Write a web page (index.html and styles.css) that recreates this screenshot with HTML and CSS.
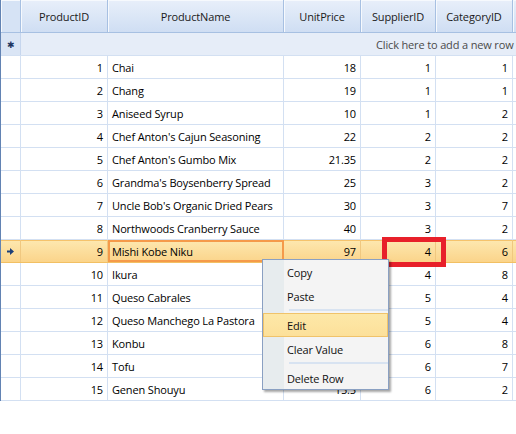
FILE: index.html
```html
<!DOCTYPE html>
<html>
<head>
<meta charset="utf-8">
<link rel="stylesheet" href="styles.css">
</head>
<body>
<div class="grid">
  <div class="row header">
    <div class="cell ind"></div>
    <div class="cell c1">ProductID</div>
    <div class="cell c2">ProductName</div>
    <div class="cell c3">UnitPrice</div>
    <div class="cell c4">SupplierID</div>
    <div class="cell c5">CategoryID</div>
    <div class="cell c6"></div>
  </div>
  <div class="row newrow">
    <div class="cell ind"><span class="star">&#x2731;</span></div>
    <div class="newtext">Click here to add a new row</div>
  </div>
  <div class="row"><div class="cell ind"></div><div class="cell c1 num">1</div><div class="cell c2">Chai</div><div class="cell c3 num">18</div><div class="cell c4 num">1</div><div class="cell c5 num">1</div><div class="cell c6"></div></div>
  <div class="row"><div class="cell ind"></div><div class="cell c1 num">2</div><div class="cell c2">Chang</div><div class="cell c3 num">19</div><div class="cell c4 num">1</div><div class="cell c5 num">1</div><div class="cell c6"></div></div>
  <div class="row"><div class="cell ind"></div><div class="cell c1 num">3</div><div class="cell c2">Aniseed Syrup</div><div class="cell c3 num">10</div><div class="cell c4 num">1</div><div class="cell c5 num">2</div><div class="cell c6"></div></div>
  <div class="row"><div class="cell ind"></div><div class="cell c1 num">4</div><div class="cell c2">Chef Anton's Cajun Seasoning</div><div class="cell c3 num">22</div><div class="cell c4 num">2</div><div class="cell c5 num">2</div><div class="cell c6"></div></div>
  <div class="row"><div class="cell ind"></div><div class="cell c1 num">5</div><div class="cell c2">Chef Anton's Gumbo Mix</div><div class="cell c3 num">21.35</div><div class="cell c4 num">2</div><div class="cell c5 num">2</div><div class="cell c6"></div></div>
  <div class="row"><div class="cell ind"></div><div class="cell c1 num">6</div><div class="cell c2">Grandma's Boysenberry Spread</div><div class="cell c3 num">25</div><div class="cell c4 num">3</div><div class="cell c5 num">2</div><div class="cell c6"></div></div>
  <div class="row"><div class="cell ind"></div><div class="cell c1 num">7</div><div class="cell c2">Uncle Bob's Organic Dried Pears</div><div class="cell c3 num">30</div><div class="cell c4 num">3</div><div class="cell c5 num">7</div><div class="cell c6"></div></div>
  <div class="row"><div class="cell ind"></div><div class="cell c1 num">8</div><div class="cell c2">Northwoods Cranberry Sauce</div><div class="cell c3 num">40</div><div class="cell c4 num">3</div><div class="cell c5 num">2</div><div class="cell c6"></div></div>
  <div class="row selected"><div class="cell ind"><svg width="7" height="7" viewBox="0 0 7 7"><path d="M0 2.5h3V0l4 3.5L3 7V4.5H0z" fill="#1d3f78"/></svg></div><div class="cell c1 num">9</div><div class="cell c2 current">Mishi Kobe Niku</div><div class="cell c3 num">97</div><div class="cell c4 num">4</div><div class="cell c5 num">6</div><div class="cell c6"></div></div>
  <div class="row"><div class="cell ind"></div><div class="cell c1 num">10</div><div class="cell c2">Ikura</div><div class="cell c3 num">31</div><div class="cell c4 num">4</div><div class="cell c5 num">8</div><div class="cell c6"></div></div>
  <div class="row"><div class="cell ind"></div><div class="cell c1 num">11</div><div class="cell c2">Queso Cabrales</div><div class="cell c3 num">21</div><div class="cell c4 num">5</div><div class="cell c5 num">4</div><div class="cell c6"></div></div>
  <div class="row"><div class="cell ind"></div><div class="cell c1 num">12</div><div class="cell c2">Queso Manchego La Pastora</div><div class="cell c3 num">38</div><div class="cell c4 num">5</div><div class="cell c5 num">4</div><div class="cell c6"></div></div>
  <div class="row"><div class="cell ind"></div><div class="cell c1 num">13</div><div class="cell c2">Konbu</div><div class="cell c3 num">6</div><div class="cell c4 num">6</div><div class="cell c5 num">8</div><div class="cell c6"></div></div>
  <div class="row"><div class="cell ind"></div><div class="cell c1 num">14</div><div class="cell c2">Tofu</div><div class="cell c3 num">23.25</div><div class="cell c4 num">6</div><div class="cell c5 num">7</div><div class="cell c6"></div></div>
  <div class="row"><div class="cell ind"></div><div class="cell c1 num">15</div><div class="cell c2">Genen Shouyu</div><div class="cell c3 num">15.5</div><div class="cell c4 num">6</div><div class="cell c5 num">2</div><div class="cell c6"></div></div>
</div>
<div class="highlight-box"></div>
<div class="menu">
  <div class="item">Copy</div>
  <div class="item">Paste</div>
  <div class="sep"></div>
  <div class="item active">Edit</div>
  <div class="item">Clear Value</div>
  <div class="sep"></div>
  <div class="item">Delete Row</div>
</div>
</body>
</html>
```
FILE: styles.css
```css
html, body {
  margin: 0;
  padding: 0;
  background: #fff;
  overflow: hidden;
  width: 516px;
  height: 434px;
}
body {
  font-family: "Open Sans", "Noto Sans", sans-serif;
  font-size: 11px;
  letter-spacing: -0.15px;
  color: #000;
  position: relative;
}
.grid {
  width: 600px;
  height: 401px;
  overflow: hidden;
  border-left: 1px solid #6283b3;
  box-sizing: border-box;
}
.row {
  display: flex;
  height: 23px;
  box-sizing: border-box;
  border-bottom: 1px solid #d3e0f2;
}
.cell {
  box-sizing: border-box;
  height: 100%;
  border-right: 1px solid #d3e0f2;
  padding: 0 4px;
  display: flex;
  align-items: center;
  white-space: nowrap;
  overflow: hidden;
  flex: none;
}
.num { justify-content: flex-end; }
.ind { width: 20px; padding: 0; justify-content: center; }
.c1 { width: 87px; }
.c2 { width: 176px; }
.c3 { width: 77px; }
.c4 { width: 75px; }
.c5 { width: 77px; }
.c6 { width: 100px; }

.header {
  height: 33px;
  border-bottom: 1px solid #a7c0e2;
  background: linear-gradient(#e8effa, #cfdef3);
}
.header .cell {
  justify-content: center;
  border-right: 1px solid #a7c0e2;
  box-shadow: inset 1px 1px 0 #f6f9fd;
  color: #1a1a1a;
}
.header .ind { background: #d6e3f5; }

.newrow {
  height: 23px;
  background: #e6edf8;
  border-bottom: 1px solid #d3e0f2;
}
.newrow .ind {
  background: #dae5f5;
  border-right: 1px solid #c6d6ee;
}
.star { font-size: 9px; color: #1d3560; }
.newtext {
  padding-left: 355px;
  display: flex;
  align-items: center;
  color: #4a4a4a;
  white-space: nowrap;
}

.selected {
  background: linear-gradient(#fde8b0, #fbd48a);
  border-bottom: 1px solid #f2c063;
  box-shadow: inset 0 1px 0 #f5c36c;
}
.selected .cell { border-right-color: #f0c880; }
.selected .current {
  border: 2px solid #f59a4a;
  padding-left: 2px;
}

.highlight-box {
  position: absolute;
  left: 382px;
  top: 237px;
  width: 64px;
  height: 30px;
  box-sizing: border-box;
  border: 5px solid #e8202a;
}

.menu {
  position: absolute;
  left: 262px;
  top: 259px;
  width: 127px;
  height: 131px;
  box-sizing: border-box;
  border: 1px solid #8aa0c2;
  background: linear-gradient(90deg, #e7ecee 0, #e7ecee 21px, #f4f4f4 21px);
  box-shadow: 2px 2px 2px rgba(0,0,0,0.35);
  padding: 0;
}
.item {
  height: 24px;
  display: flex;
  align-items: center;
  padding-left: 24px;
  color: #111;
}
.item.active {
  height: 24px;
  background: linear-gradient(#fde8a8, #fce09a);
  border: 1px solid #f0c36a;
  box-sizing: border-box;
  padding-left: 23px;
}
.sep {
  height: 2px;
  margin: 1px 0 2px 26px;
  background: #d8e3f1;
}
```
